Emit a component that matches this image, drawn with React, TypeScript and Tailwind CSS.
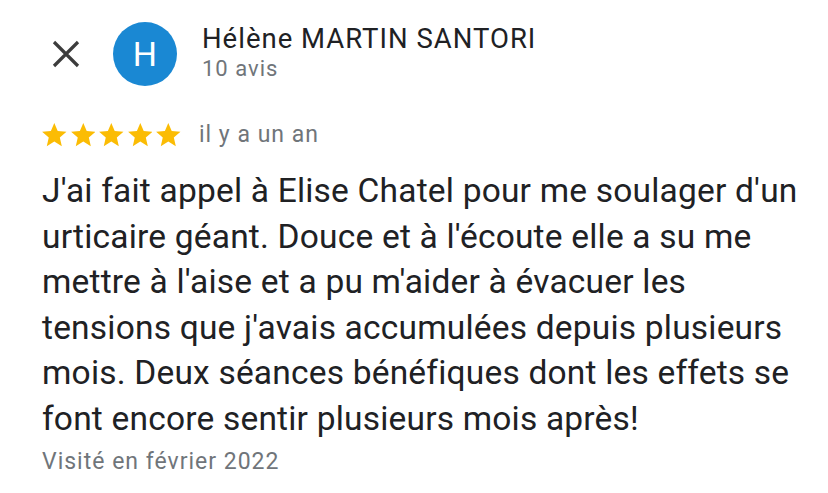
function Star() {
  return (
    <svg viewBox="2 2 20 19.3" className="w-[24.6px] h-[23.5px]" fill="#fbbc04">
      <path d="M12 17.27 18.18 21l-1.64-7.03L22 9.24l-7.19-.61L12 2 9.19 8.63 2 9.24l5.46 4.73L5.82 21z" />
    </svg>
  );
}

export default function App() {
  return (
    <div className="w-[828px] h-[493px] bg-white font-['Roboto',sans-serif] text-[#202124] pl-[42px] overflow-hidden">
      {/* header */}
      <div className="flex items-center h-[64px] mt-[22px]">
        <button className="w-[44px] ml-[2px] flex items-center justify-center text-[#3c3c3c]">
          <svg viewBox="0 0 28 28" className="w-[28px] h-[28px]" stroke="currentColor" strokeWidth={3.2} strokeLinecap="butt">
            <path d="M2 2 26 26M26 2 2 26" />
          </svg>
        </button>
        <div className="ml-[25px] w-[64px] h-[64px] rounded-full bg-[#1a88d3] flex items-center justify-center text-white text-[34px] leading-none">
          H
        </div>
        <div className="ml-[25px] -mt-[2px]">
          <div className="text-[27.5px] leading-[32px] tracking-[1px]">Hélène MARTIN SANTORI</div>
          <div className="text-[22px] leading-[28px] tracking-[1px] text-[#70757a]">10 avis</div>
        </div>
      </div>

      {/* rating */}
      <div className="flex items-center mt-[36px] h-[26px]">
        <div className="flex gap-[4px]">
          <Star />
          <Star />
          <Star />
          <Star />
          <Star />
        </div>
        <span className="ml-[18px] text-[23px] tracking-[1px] text-[#70757a]">il y a un an</span>
      </div>

      {/* review */}
      <p className="mt-[20px] text-[33.5px] leading-[45.5px] tracking-[0.2px] whitespace-nowrap">
        J'ai fait appel à Elise Chatel pour me soulager d'un
        <br />
        urticaire géant. Douce et à l'écoute elle a su me
        <br />
        mettre à l'aise et a pu m'aider à évacuer les
        <br />
        tensions que j'avais accumulées depuis plusieurs
        <br />
        mois. Deux séances bénéfiques dont les effets se
        <br />
        font encore sentir plusieurs mois après!
      </p>

      <div className="mt-[6px] text-[23px] leading-[30px] tracking-[1px] text-[#70757a]">Visité en février 2022</div>
    </div>
  );
}
